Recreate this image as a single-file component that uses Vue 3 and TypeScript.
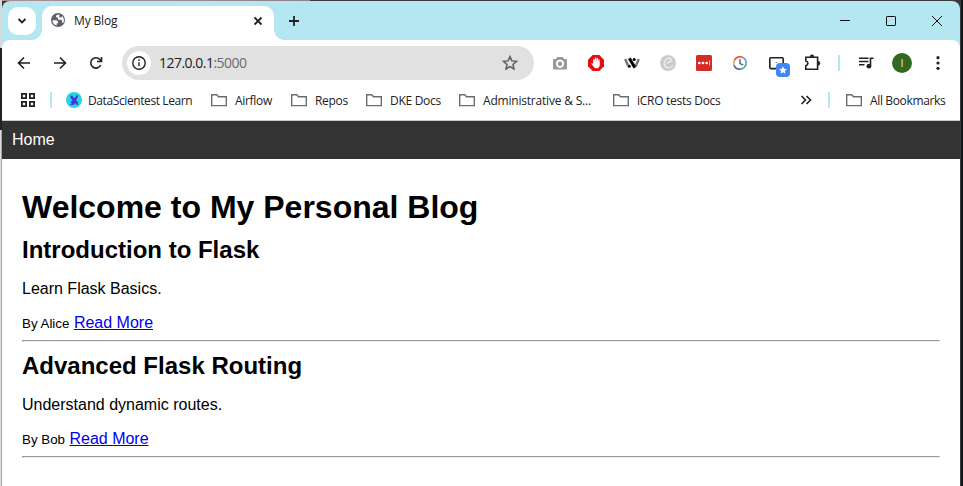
<script setup lang="ts">
interface Bookmark {
  label: string
  width: number
  gap: number
  spacing: number
}

interface Post {
  title: string
  summary: string
  author: string
}

const folders: Bookmark[] = [
  { label: 'Airflow', width: 37, gap: 19, spacing: -0.3 },
  { label: 'Repos', width: 33, gap: 18, spacing: -0.3 },
  { label: 'DKE Docs', width: 51, gap: 18, spacing: -0.3 },
  { label: 'Administrative & S...', width: 108, gap: 22, spacing: -0.2 },
  { label: 'iCRO tests Docs', width: 84, gap: 0, spacing: -0.28 },
]

const posts: Post[] = [
  { title: 'Introduction to Flask', summary: 'Learn Flask Basics.', author: 'Alice' },
  { title: 'Advanced Flask Routing', summary: 'Understand dynamic routes.', author: 'Bob' },
]
</script>

<template>
  <div class="desktop">
    <div class="window">
      <header class="tabstrip">
        <button class="tab-search" aria-label="Search tabs">
          <svg width="12" height="12" viewBox="0 0 12 12"><path d="M2.500 4 6 7.500 9.500 4" class="ln heavy" /></svg>
        </button>
        <div class="tab">
          <svg class="globe" width="16" height="16" viewBox="0 0 16 16">
            <circle cx="8" cy="8" r="7" fill="#5f6368" />
            <path d="M2.500 8.300H6q2 .2 2 2v1H6.700v2.200Q2.700 12.500 2.500 8.300zM9.300 2.600Q5.500 2.800 6 5.300h1.800v1.500q0 1 1.500.9h1.800q1.200.2 1 1.800v1.300h1.200Q15 6.800 12 3.900q-.2 1.500-1.500 1.500H9.300z" fill="#fff" />
          </svg>
          <span class="tab-title">My Blog</span>
          <svg width="12" height="12" viewBox="0 0 12 12"><path d="m2.500 2.500 7 7m0-7-7 7" class="ln heavy" /></svg>
        </div>
        <svg class="new-tab" width="14" height="14" viewBox="0 0 14 14"><path d="M7 2v10M2 7h10" class="ln heavy" /></svg>
        <div class="controls">
          <svg width="12" height="12" viewBox="0 0 12 12"><path d="M1 5.500h10" class="ln thin" /></svg>
          <svg width="12" height="12" viewBox="0 0 12 12"><rect x="1.500" y="1.500" width="9" height="9" rx=".6" class="ln thin" /></svg>
          <svg width="12" height="12" viewBox="0 0 12 12"><path d="m1 1 10 10M11 1 1 11" class="ln thin" /></svg>
        </div>
      </header>

      <div class="chrome">
        <div class="toolbar">
          <span class="cell"><svg width="16" height="16" viewBox="0 0 16 16"><path d="M14 8H2.800M8 2.500 2.500 8 8 13.500" class="ln" /></svg></span>
          <span class="cell"><svg width="16" height="16" viewBox="0 0 16 16"><path d="M2 8h11.200M8 2.500 13.500 8 8 13.500" class="ln" /></svg></span>
          <span class="cell"><svg width="16" height="16" viewBox="0 0 16 16"><path d="M12.700 10a5.200 5.200 0 1 1-.8-5.500L13.300 6M13.500 2v4.500H9" class="ln" /></svg></span>
          <div class="omnibox">
            <span class="site-info">
              <svg width="16" height="16" viewBox="0 0 16 16"><circle cx="8" cy="8" r="6.200" class="ln info" /><path d="M8 7.200v4M8 4.300v1.600" class="ln info" /></svg>
            </span>
            <span class="url">127.0.0.1<span class="port">:5000</span></span>
            <svg class="star" width="18" height="18" viewBox="0 0 18 18"><path d="m9 2.600 1.850 4.300 4.650.4-3.500 3.100 1 4.600-4-2.400L5 15l1-4.600-3.500-3.100 4.650-.4z" fill="none" stroke="#5b5d60" stroke-width="1.500" /></svg>
          </div>
          <span class="cell">
            <svg width="16" height="16" viewBox="0 0 16 16"><path fill="#999" fill-rule="evenodd" d="M5 2h6l1 2h2q1 0 1 1v8.500q0 1-1 1H2q-1 0-1-1V5q0-1 1-1h2zm3 2.800a4 4 0 1 0 0 8 4 4 0 0 0 0-8z" /><circle cx="8" cy="8.800" r="2.200" fill="#999" /></svg>
          </span>
          <span class="cell">
            <svg width="16" height="16" viewBox="0 0 16 16"><path fill="#e60c10" d="M4.700 0h6.600L16 4.700v6.600L11.300 16H4.700L0 11.300V4.700z" /><path d="M5.900 9V4.800m1.700-1.600V8m1.700-4.300V8m1.600-3V10" fill="none" stroke="#fff" stroke-width="1.400" stroke-linecap="round" /><path d="M5.200 6.500V9L4 8q-.8.200-.4 1L6 12.300q.6.900 2 .9h.7q2.600 0 2.900-2.800V6.500z" fill="#fff" /></svg>
          </span>
          <span class="cell">
            <svg width="16" height="16" viewBox="0 0 16 16"><path d="M1.200 4 4 10.500M14.800 4l-3.300 7.500" fill="none" stroke="#777" stroke-width="2.500" /><path d="m5.300 3.200 5.600 9.600" fill="none" stroke="#000" stroke-width="3" /><circle cx="10.200" cy="4.600" r="1.500" /><circle cx="5.300" cy="11.300" r="1.500" /></svg>
          </span>
          <span class="cell">
            <svg width="16" height="16" viewBox="0 0 16 16"><circle cx="8" cy="8" r="8" fill="#ccc" /><path d="M12.800 10.500c-2.500 3.200-8.300 2.700-8.500-1.500C4.200 5.400 7 3 9.300 3.200c2.600.3 2.600 3.500.3 3.700-1.600.1-2 1-1.700 2.100" fill="none" stroke="#f4f4f4" stroke-width="1.200" /></svg>
          </span>
          <span class="cell">
            <svg width="16" height="16" viewBox="0 0 16 16"><rect width="16" height="16" rx="1.500" fill="#d42c27" /><circle cx="3.300" cy="8" r="1.350" fill="#fff" /><circle cx="7" cy="8" r="1.350" fill="#fff" /><circle cx="10.700" cy="8" r="1.350" fill="#fff" /><path d="M13.500 5.500v5" stroke="#fff" stroke-opacity=".7" /></svg>
          </span>
          <span class="cell">
            <svg width="16" height="16" viewBox="0 0 16 16" fill="none" stroke-width="1.700"><path d="M2 10.200A6.200 6.200 0 0 1 2.500 5" stroke="#f2a33c" /><path d="M2.500 5A6.200 6.200 0 0 1 11.500 2.900" stroke="#e4573d" /><path d="M11.500 2.900a6.200 6.200 0 0 1 2.600 5.500" stroke="#5b9bd8" /><path d="M14.100 8.400a6.200 6.200 0 0 1-5.600 5.700" stroke="#45a69a" /><path d="M8.500 14.100a6.200 6.200 0 0 1-6.500-3.900" stroke="#4663ac" /><path d="M8 4.200v4.300l3.300 1.500" stroke="#4c5053" stroke-width="1.300" /></svg>
          </span>
          <span class="cell shortcut">
            <svg width="16" height="14" viewBox="0 0 16 14"><rect x="1.800" y="1.800" width="13.400" height="10.800" rx="1" class="ln" /><path d="M7.500 6.500h2" stroke="#888" /></svg>
            <span class="badge"><svg width="10" height="10" viewBox="0 0 10 10"><path d="m5 1.300 1.150 2.500 2.750.3L6.850 6l.6 2.700L5 7.300 2.550 8.700l.6-2.700L1.100 4.100l2.750-.3z" fill="#fff" /></svg></span>
          </span>
          <span class="cell">
            <svg width="18" height="18" viewBox="0 0 18 18"><path d="M2.800 3.200h11.800v12H2.800v-3.500c2.800-.8 2.800-4 0-4.700z" class="ln" /><path d="M7 2.800a2 2 0 0 1 4 0zM15 7.300a2 2 0 0 1 0 4z" fill="#202124" stroke="#202124" stroke-width=".6" /></svg>
          </span>
          <span class="divider"></span>
          <span class="cell">
            <svg width="16" height="16" viewBox="0 0 16 16"><path d="M1 3.300h9.500M1 6.500h9.500M1 9.700h5.500M12.500 11.200V3.300H15.500" class="ln" /><circle cx="10.900" cy="11.200" r="2.400" fill="#202124" /></svg>
          </span>
          <span class="cell"><span class="avatar">I</span></span>
          <span class="cell">
            <svg width="16" height="16" viewBox="0 0 16 16" fill="#202124"><circle cx="8" cy="2.700" r="1.600" /><circle cx="8" cy="8" r="1.600" /><circle cx="8" cy="13.300" r="1.600" /></svg>
          </span>
        </div>

        <nav class="bookmarks">
          <svg class="apps" width="14" height="14" viewBox="0 0 14 14"><path d="M.9.900h4.200v4.200H.9zM8.900.900h4.200v4.200H8.900zM.9 8.900h4.200v4.200H.9zM8.900 8.900h4.200v4.200H8.900z" class="ln heavy" /></svg>
          <span class="divider first"></span>
          <svg width="16" height="16" viewBox="0 0 16 16"><circle cx="8" cy="8" r="8" fill="#29d6df" /><path d="m4 3.500 2.500.2L7.500 6l2-.5L10.500 3l1.500.5-.8 3L9.800 8l1.900 1.700.3 3.500-1.800-.7-1-1.800-1 2-3.500.3-.7-1L6 11.500 4.500 10 6.500 8.500 5 6.500z" fill="#4233df" /></svg>
          <span class="site">DataScientest Learn</span>
          <template v-for="b in folders" :key="b.label">
            <svg class="folder" width="16" height="14" viewBox="0 0 16 14"><path d="M.7 1.700h5.100l1.700 2h7.800v8.900H.7z" /></svg>
            <span class="name" :style="{ width: b.width + 'px', marginRight: b.gap + 'px', letterSpacing: b.spacing + 'px' }">{{ b.label }}</span>
          </template>
          <svg class="more" width="12" height="12" viewBox="0 0 12 12"><path d="m1.500 2 4 4-4 4M6.500 2l4 4-4 4" class="ln" /></svg>
          <span class="divider last"></span>
          <svg class="folder" width="16" height="14" viewBox="0 0 16 14"><path d="M.7 1.700h5.100l1.700 2h7.800v8.900H.7z" /></svg>
          <span class="name all">All Bookmarks</span>
        </nav>
      </div>

      <div class="page">
        <nav class="site-nav"><a>Home</a></nav>
        <main>
          <h1>Welcome to My Personal Blog</h1>
          <article v-for="p in posts" :key="p.title">
            <h2>{{ p.title }}</h2>
            <p>{{ p.summary }}</p>
            <div class="byline"><small>By {{ p.author }}</small> <a href="#">Read More</a></div>
            <hr />
          </article>
        </main>
      </div>
    </div>
  </div>
</template>

<style>
body {
  margin: 0;
  overflow: hidden;
}
</style>

<style scoped>
.desktop {
  box-sizing: border-box;
  width: 963px;
  height: 486px;
  padding: 1px 3px 0 2px;
  background:
    linear-gradient(#d8d8d8, #d8d8d8) 0 0 / 2px 48px no-repeat,
    linear-gradient(#222, #222) 0 48px / 2px 82px no-repeat,
    linear-gradient(90deg, #dcdcdc 1px, #a8a8a8 1px) 0 130px / 2px 356px no-repeat,
    linear-gradient(90deg, #aa8f91, #8f8385) 0 0 / 310px 1px no-repeat,
    linear-gradient(90deg, #39393b 1px, #151719 1px) 960px 0 / 3px 486px no-repeat,
    #3a3a3c;
}
.window {
  height: 485px;
  display: flex;
  flex-direction: column;
  border-radius: 8px 8px 0 0;
  overflow: hidden;
  background: #b5e7f2;
  font-family: "Open Sans", "Noto Sans", sans-serif;
  font-size: 12px;
  color: #202124;
}
svg {
  display: block;
  flex: none;
}
.ln {
  fill: none;
  stroke: #202124;
  stroke-width: 1.6;
}
.heavy {
  stroke-width: 1.8;
}
.thin {
  stroke: #111;
  stroke-width: 1;
}
.info {
  stroke-width: 1.4;
}
.tabstrip {
  height: 39px;
  display: flex;
  align-items: center;
}
.tab-search {
  width: 28px;
  height: 28px;
  margin: 0 6px;
  padding: 0;
  border: 0;
  border-radius: 10px;
  background: #fff;
  display: grid;
  place-items: center;
}
.tab {
  position: relative;
  box-sizing: border-box;
  width: 232px;
  height: 34px;
  margin-top: 5px;
  padding: 0 10px 5px 8px;
  border-radius: 10px 10px 0 0;
  background: #fff;
  display: flex;
  align-items: center;
}
.tab::before,
.tab::after {
  content: "";
  position: absolute;
  bottom: 0;
  width: 10px;
  height: 10px;
}
.tab::before {
  left: -10px;
  background: radial-gradient(circle at 0 0, transparent 9.5px, #fff 10px);
}
.tab::after {
  right: -10px;
  background: radial-gradient(circle at 100% 0, transparent 9.5px, #fff 10px);
}
.globe {
  margin-top: -2px;
}
.tab-title {
  flex: 1;
  margin-left: 8px;
  letter-spacing: -0.15px;
}
.new-tab {
  margin-left: 13px;
}
.controls {
  display: flex;
  gap: 34px;
  margin: 0 17px 0 auto;
}
.chrome {
  height: 80px;
  border-bottom: 1px solid #c6cccc;
  border-radius: 8px 8px 0 0;
  background: #fff;
}
.toolbar {
  height: 46px;
  padding: 0 4px;
  display: flex;
  align-items: center;
}
.cell {
  width: 36px;
  display: flex;
  justify-content: center;
}
.omnibox {
  box-sizing: border-box;
  width: 412px;
  height: 34px;
  margin: 0 8px;
  padding: 0 15px 0 5px;
  border-radius: 17px;
  background: #e1e1e1;
  display: flex;
  align-items: center;
}
.site-info {
  width: 24px;
  height: 24px;
  border-radius: 50%;
  background: #fff;
  display: grid;
  place-items: center;
}
.url {
  flex: 1;
  margin-left: 8px;
  padding-bottom: 1px;
  font-size: 14px;
  letter-spacing: -0.52px;
}
.port {
  color: #6a6d70;
}
.divider {
  width: 2px;
  height: 16px;
  margin: 0 8px;
  background: #b5e7f2;
}
.shortcut {
  position: relative;
}
.badge {
  position: absolute;
  left: 18px;
  top: 7px;
  width: 14px;
  height: 14px;
  border-radius: 4px;
  background: #4285f4;
  display: grid;
  place-items: center;
}
.avatar {
  width: 20px;
  height: 20px;
  border-radius: 50%;
  background: #33691e;
  color: #dfe8da;
  font-size: 11px;
  line-height: 20px;
  text-align: center;
}
.bookmarks {
  height: 28px;
  padding: 0 15px 0 19px;
  display: flex;
  align-items: center;
  white-space: nowrap;
}
.bookmarks .first {
  margin: 0 14px 0 15px;
}
.site {
  width: 104px;
  margin: 0 19px 0 6px;
  letter-spacing: -0.4px;
}
.folder path {
  fill: none;
  stroke: #6a6d70;
  stroke-width: 1.4;
}
.name {
  margin-left: 8px;
}
.more {
  margin-left: auto;
}
.bookmarks .last {
  margin: 0 16px;
}
.all {
  width: 75px;
  letter-spacing: -0.36px;
}
.page {
  flex: 1;
  background: #fff;
  color: #000;
  font-family: "Liberation Sans", Arial, sans-serif;
  font-size: 16px;
}
.site-nav {
  padding: 10px;
  background: #333;
  color: #fff;
  line-height: 18px;
}
main {
  padding: 29px 20px 0;
}
h1 {
  margin: 0;
  font-size: 32px;
  line-height: 38px;
}
h2 {
  margin: 10px 0 17px;
  font-size: 24px;
  line-height: 27px;
}
p {
  margin: 0 0 16px;
  line-height: 18px;
}
.byline {
  height: 18px;
  line-height: 18px;
}
small {
  font-size: 13.333px;
}
.byline a {
  color: #0000ee;
}
hr {
  margin: 8px 0 0;
  border: 1px solid;
  border-color: #999 #eee #eee #999;
}
</style>
